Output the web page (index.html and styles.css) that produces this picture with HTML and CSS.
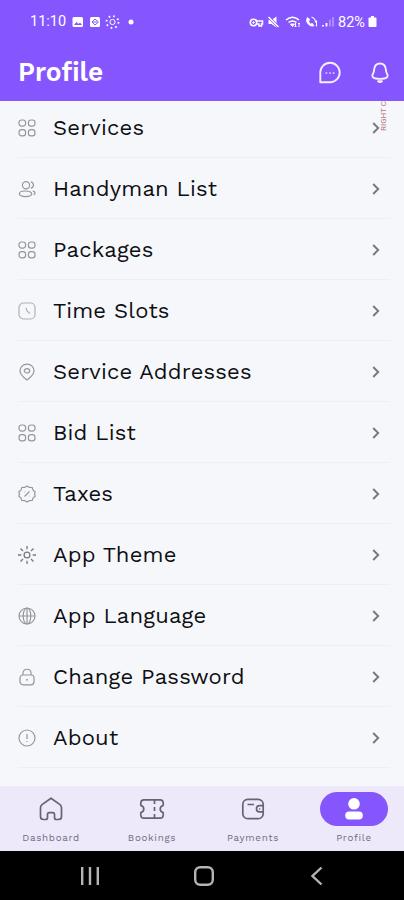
FILE: index.html
```html
<!DOCTYPE html>
<html lang="en">
<head>
  <meta charset="UTF-8">
  <meta name="viewport" content="width=device-width, initial-scale=1.0">
  <title>Profile</title>
  <link rel="stylesheet" href="styles.css">
</head>
<body>
  <!-- Shared icons -->
  <svg class="sprite" aria-hidden="true">
    <symbol id="grid" viewBox="0 0 18 18">
      <rect x="1" y="1" width="6.600" height="6.200" rx="2.600"/>
      <rect x="10.400" y="1" width="6.600" height="6.200" rx="2.600"/>
      <rect x="1" y="10.600" width="6.600" height="6.200" rx="2.600"/>
      <rect x="10.400" y="10.600" width="6.600" height="6.200" rx="2.600"/>
    </symbol>
    <symbol id="chevron" viewBox="0 0 8 12">
      <path d="M1.200 1l5 5-5 5"/>
    </symbol>
  </svg>

  <div class="phone">
    <header class="header">
      <div class="status-bar">
        <span class="time">11:10</span>
        <svg class="status-left" width="64" height="16" viewBox="0 0 64 16">
          <rect x="1.500" y="3" width="10.500" height="10" rx="1.500" fill="#fff"/>
          <path d="M3 11l2.500-3 2 2 1.500-1.500L11 11z" fill="#8556fd"/>
          <rect x="19" y="3" width="10" height="10" rx="1.500" fill="#fff"/>
          <path d="M21 8l3-3 3.500 3-3.500 3z" fill="none" stroke="#8556fd"/>
          <path d="M22 8h4" stroke="#8556fd"/>
          <circle cx="41.500" cy="8" r="2.600" fill="none" stroke="#fff"/>
          <circle cx="41.500" cy="8" r="6" fill="none" stroke="#fff" stroke-width="1.800" stroke-dasharray="1.700 3.010"/>
          <circle cx="60" cy="8" r="2.500" fill="#fff"/>
        </svg>
        <svg class="status-right" width="88" height="16" viewBox="0 0 88 16" fill="none" stroke="#fff">
          <circle cx="4.500" cy="8.500" r="3.200" stroke-width="1.600"/>
          <circle cx="4.500" cy="8.500" r=".8" fill="#fff"/>
          <path d="M7.500 7h6v3h-1v2h-2.500v-2h-2.500" stroke-width="1.500"/>
          <path d="M19.500 6h3l5-3.500v11l-5-3.500h-3z" fill="#fff" stroke="none"/>
          <path d="M19.500 3l10 10" stroke="#8556fd" stroke-width="2.600"/>
          <path d="M19.500 3l10 10" stroke-width="1.400"/>
          <path d="M37 6c4-3.500 9-3.500 13 0M39.500 8.500c2.500-2 5.500-2 8 0" stroke-width="1.500"/>
          <path d="M41.500 10h4l-2 2.500z" fill="#fff"/>
          <path d="M46.500 13V9m-1 3l1 1 1-1M50 9v4m-1-3l1-1 1 1"/>
          <path d="M58.500 3.500c-3 4 1.500 9.500 6.500 8.500l-1.500-2.500-2 .5c-1-.8-1.800-2-1.900-3.200l1.400-1z" fill="#fff" stroke-width=".8"/>
          <path d="M62.500 3c3 1 4 3 4 5.500M67.500 6.500v6" stroke-width="1.100"/>
          <path d="M74 12.500v-1.500M77.500 12.500V9" stroke-width="1.800"/>
          <path d="M81 12.500v-7M84 12.500V3" stroke-width="1.600" opacity=".4"/>
        </svg>
        <span class="battery">82%</span>
        <svg class="battery-icon" width="9" height="12" viewBox="0 0 9 12"><path d="M3 0h3v1.500h1.500a1 1 0 0 1 1 1V10a1 1 0 0 1-1 1h-6a1 1 0 0 1-1-1V2.500a1 1 0 0 1 1-1H3z" fill="#fff"/></svg>
      </div>
      <div class="title-bar">
        <h1>Profile</h1>
        <svg class="chat" width="24" height="24" viewBox="0 0 24 24">
          <path d="M2.300 21.200V11.500A9.700 9.700 0 1 1 12 21.200z" stroke-width="1.900"/>
          <path d="M7.500 12h1.800M11.100 12h1.800M14.700 12h1.800" stroke-width="1.500" opacity=".8"/>
        </svg>
        <svg class="bell" width="20" height="24" viewBox="0 0 20 24">
          <path d="M10 2.500c-3.500 0-5.500 2.500-5.800 5.800-.2 2.700-.8 3.700-1.500 5-1 2 .2 3.600 2 4 3.500.7 7.100.7 10.600 0 1.800-.4 3-2 2-4-.7-1.300-1.300-2.300-1.500-5-.3-3.300-2.300-5.800-5.800-5.800z" stroke-width="1.900"/>
          <path d="M8 20.200c.8 1.200 3.200 1.200 4 0z" stroke-width="1.700"/>
        </svg>
      </div>
    </header>

    <main class="menu">
      <span class="banner">RIGHT C</span>
      <div class="item">
        <svg class="icon"><use href="#grid"/></svg>
        <span class="label">Services</span>
        <svg class="arrow"><use href="#chevron"/></svg>
      </div>
      <div class="item">
        <svg class="icon" viewBox="0 0 18 18">
          <circle cx="8" cy="5.200" r="3.600"/>
          <ellipse cx="7.500" cy="13.800" rx="6.200" ry="2.800"/>
          <path d="M12.800 1.800c3.500.5 3.500 5.700 0 6.400M14.800 11.200c3 .5 2.700 3 .8 3.400"/>
        </svg>
        <span class="label">Handyman List</span>
        <svg class="arrow"><use href="#chevron"/></svg>
      </div>
      <div class="item">
        <svg class="icon"><use href="#grid"/></svg>
        <span class="label">Packages</span>
        <svg class="arrow"><use href="#chevron"/></svg>
      </div>
      <div class="item">
        <svg class="icon light" viewBox="0 0 18 18">
          <rect x="1" y="1" width="16" height="16" rx="4.500"/>
          <path d="M8 6l1 3 3 2.500"/>
        </svg>
        <span class="label">Time Slots</span>
        <svg class="arrow"><use href="#chevron"/></svg>
      </div>
      <div class="item">
        <svg class="icon" viewBox="0 0 18 18">
          <path d="M9 17C5.500 14.500 2 11.300 2 7.800 2 4 5 1.200 9 1.200S16 4 16 7.800c0 3.500-3.500 6.700-7 9.200z"/>
          <ellipse cx="9" cy="7.800" rx="2.700" ry="2.200"/>
        </svg>
        <span class="label">Service Addresses</span>
        <svg class="arrow"><use href="#chevron"/></svg>
      </div>
      <div class="item">
        <svg class="icon"><use href="#grid"/></svg>
        <span class="label">Bid List</span>
        <svg class="arrow"><use href="#chevron"/></svg>
      </div>
      <div class="item">
        <svg class="icon" viewBox="0 0 18 18">
          <path d="M9 .9l2.300 1.500 2.900.1.900 2.700L17.200 7l-.7 2 .7 2.200-2.100 1.700-.9 2.600-2.900.1L9 17.100l-2.300-1.500-2.900-.1-.9-2.600L.8 11.200 1.500 9 .8 7l2.100-1.800.9-2.700 2.900-.1z"/>
          <path d="M6.500 11.500l5-5M6.600 6.800h.4M11 11.200h.4"/>
        </svg>
        <span class="label">Taxes</span>
        <svg class="arrow"><use href="#chevron"/></svg>
      </div>
      <div class="item">
        <svg class="icon sun" viewBox="0 0 18 18">
          <circle cx="9" cy="9" r="2.900"/>
          <path d="M9 0v3.300M9 14.700V18M0 9h3.300M14.700 9H18M2.500 2.500L5 5M13 13l2.500 2.500M2.500 15.500L5 13M13 5l2.500-2.500"/>
        </svg>
        <span class="label">App Theme</span>
        <svg class="arrow"><use href="#chevron"/></svg>
      </div>
      <div class="item">
        <svg class="icon" viewBox="0 0 18 18">
          <circle cx="9" cy="9" r="8"/>
          <ellipse cx="9" cy="9" rx="3.800" ry="8"/>
          <path d="M1 9h16M9 1v16"/>
        </svg>
        <span class="label">App Language</span>
        <svg class="arrow"><use href="#chevron"/></svg>
      </div>
      <div class="item">
        <svg class="icon" viewBox="0 0 18 18">
          <rect x="2" y="7" width="14" height="9.800" rx="3"/>
          <path d="M5 7V5c0-5 8-5 8 0v2M8 11.900h2"/>
        </svg>
        <span class="label">Change Password</span>
        <svg class="arrow"><use href="#chevron"/></svg>
      </div>
      <div class="item">
        <svg class="icon" viewBox="0 0 18 18">
          <circle cx="9" cy="9" r="8"/>
          <path d="M9 5v5M9 12v1"/>
        </svg>
        <span class="label">About</span>
        <svg class="arrow"><use href="#chevron"/></svg>
      </div>
    </main>

    <nav class="tabs">
      <div class="tab">
        <span class="tab-icon">
          <svg width="24" height="26" viewBox="0 0 24 26">
            <path d="M12 2.200L3 8.600Q1.500 9.800 1.500 11.800v8.700q0 3 3 3h2Q8.500 23.500 8.500 21.500v-3q0-1.800 1.700-1.800h3.600q1.700 0 1.700 1.800v3q0 2 2 2h2q3 0 3-3v-8.700q0-2-1.500-3.200z"/>
          </svg>
        </span>
        <span class="tab-label">Dashboard</span>
      </div>
      <div class="tab">
        <span class="tab-icon">
          <svg width="26" height="22" viewBox="0 0 26 22">
            <path d="M5 1.800h16q3.200 0 3.200 3.500v2.200c-4 1-4 6 0 7v2.200q0 3.500-3.200 3.500H5q-3.200 0-3.200-3.500v-2.200c4-1 4-6 0-7V5.300Q1.800 1.800 5 1.800z"/>
            <path d="M15.500 2v4M15.500 9v4M15.500 16v4"/>
          </svg>
        </span>
        <span class="tab-label">Bookings</span>
      </div>
      <div class="tab">
        <span class="tab-icon">
          <svg width="24" height="24" viewBox="0 0 24 24">
            <rect x="1.800" y="2.300" width="20.400" height="19.400" rx="5"/>
            <path d="M6.500 7.500H13M22 8.700h-3.500c-4 0-4 6.200 0 6.200H22M18.200 11.800h1"/>
          </svg>
        </span>
        <span class="tab-label">Payments</span>
      </div>
      <div class="tab active">
        <span class="tab-icon">
          <svg width="20" height="24" viewBox="0 0 20 24">
            <circle cx="10" cy="6.800" r="5.800"/>
            <rect x="1.200" y="14.500" width="17.600" height="8" rx="4"/>
          </svg>
        </span>
        <span class="tab-label">Profile</span>
      </div>
    </nav>

    <div class="system-bar">
      <svg width="20" height="20" viewBox="0 0 20 20"><path d="M2.200 1v18M10 1v18M17.800 1v18"/></svg>
      <svg width="20" height="20" viewBox="0 0 20 20"><rect x="1.200" y="1.200" width="17.600" height="17.600" rx="5"/></svg>
      <svg width="20" height="20" viewBox="0 0 20 20"><path d="M14.500 1.500L5.500 10l9 8.500"/></svg>
    </div>
  </div>
</body>
</html>
```
FILE: styles.css
```css
body {
  margin: 0;
  font-family: "Work Sans", Inter, sans-serif;
}
svg {
  flex: none;
}
.sprite {
  position: absolute;
  width: 0;
  height: 0;
}
.phone {
  display: flex;
  flex-direction: column;
  width: 404px;
  height: 900px;
  overflow: hidden;
  background-color: #f6f7fb;
}
.header {
  height: 101px;
  flex: none;
  background-color: #8556fd;
  color: #fff;
}
.status-bar {
  display: flex;
  align-items: center;
  height: 43px;
  padding: 0 27px 0 30px;
  font-family: Roboto, sans-serif;
  font-size: 14.5px;
}
.time {
  width: 41px;
}
.status-right {
  margin-left: auto;
}
.battery {
  width: 28px;
  margin-left: 1px;
  padding-top: 1px;
}
.battery-icon {
  margin-left: 2px;
}
.title-bar {
  display: flex;
  align-items: center;
  height: 58px;
  padding: 0 14px 0 18px;
}
.title-bar h1 {
  flex: 1;
  margin: 0;
  font-size: 26.3px;
  font-weight: 600;
}
.title-bar svg {
  margin-top: 1px;
  fill: none;
  stroke: #f6efff;
  stroke-linejoin: round;
}
.title-bar .chat {
  margin-right: 28px;
}
.menu {
  position: relative;
  display: flex;
  flex-direction: column;
  justify-content: flex-end;
  height: 667px;
  margin-bottom: 18px;
  flex: none;
  overflow: hidden;
}
.banner {
  position: absolute;
  top: 0;
  right: 15px;
  color: #b5747c;
  font-family: Roboto, sans-serif;
  font-size: 8px;
  line-height: 10px;
  white-space: nowrap;
  writing-mode: vertical-rl;
  transform: rotate(180deg);
}
.item {
  display: flex;
  align-items: center;
  box-sizing: border-box;
  height: 61px;
  flex: none;
  margin: 0 14px 0 18px;
  padding: 1px 10px 0 0;
  border-bottom: 1px solid #eeeff3;
}
.icon {
  width: 18px;
  height: 18px;
  fill: none;
  stroke: #96979b;
  stroke-width: 1.2;
}
.light {
  stroke: #b0b1b5;
}
.sun {
  stroke: #77787c;
  stroke-width: 1.3;
}
.label {
  flex: 1;
  margin: -1px 0 0 17px;
  color: #0e0f12;
  font-size: 22px;
  letter-spacing: 0.2px;
}
.arrow {
  width: 8px;
  height: 12px;
  fill: none;
  stroke: #77787c;
  stroke-width: 1.9;
}
.tabs {
  display: flex;
  height: 65px;
  flex: none;
  background-color: #ede9fb;
}
.tab {
  display: flex;
  flex-direction: column;
  align-items: center;
  width: 101px;
  padding-top: 6px;
}
.tab-icon {
  display: flex;
  align-items: center;
  justify-content: center;
  width: 68px;
  height: 34px;
  border-radius: 17px;
}
.tab-icon svg {
  fill: none;
  stroke: #666374;
  stroke-width: 1.7;
}
.tab-icon path {
  stroke-linejoin: round;
}
.active .tab-icon {
  background-color: #8556fd;
}
.active svg {
  fill: #fff;
  stroke: none;
}
.tab-label {
  margin-top: 5px;
  padding-left: 1px;
  color: #706d80;
  font-size: 9.8px;
  line-height: 14px;
  letter-spacing: 0.7px;
}
.system-bar {
  display: flex;
  align-items: center;
  justify-content: center;
  gap: 93.5px;
  flex: 1;
  padding-left: 3px;
  background-color: #000;
}
.system-bar svg {
  fill: none;
  stroke: #b4b4b4;
  stroke-width: 2.4;
}
```
